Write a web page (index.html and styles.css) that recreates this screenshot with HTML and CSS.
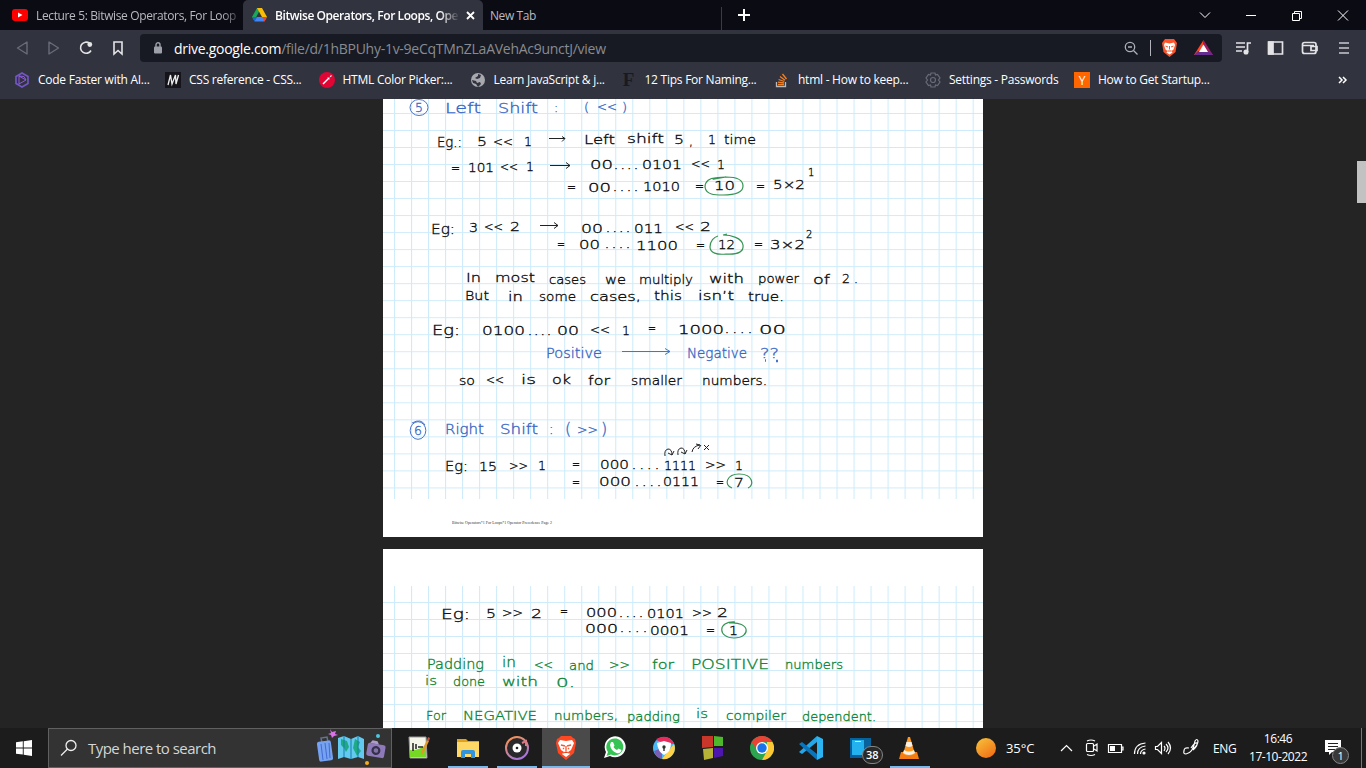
FILE: index.html
```html
<!DOCTYPE html>
<html lang="en">
<head>
<meta charset="utf-8">
<title>Bitwise Operators, For Loops, Operator Precedence</title>
<link rel="stylesheet" href="styles.css">
</head>
<body>
<header class="tabs">
  <div class="tab tab-first">
    <svg width="16" height="12" viewBox="0 0 16 12"><rect width="16" height="12" rx="3" fill="#f00"/><path d="M6 3.500v5L10.500 6z" fill="#fff"/></svg>
    <span class="tab-title">Lecture 5: Bitwise Operators, For Loop</span>
  </div>
  <div class="tab tab-active">
    <svg width="15" height="14" viewBox="0 0 15 14"><path d="M5 0h4L4.500 8.500 2.500 13 0 9z" fill="#19a75a"/><path d="M5 0h5l5 9h-5z" fill="#fbbc04"/><path d="M0 9h5l-2.500 4.500z" fill="#1967d2"/><path d="M5 9h10l-2.500 4.500h-10z" fill="#4285f4"/><path d="M10 9h5l-2.500 4.500z" fill="#ea4335"/></svg>
    <span class="tab-title">Bitwise Operators, For Loops, Ope</span>
    <svg class="tab-close" width="9" height="9" viewBox="0 0 9 9"><path d="M1 1l7 7M8 1L1 8" stroke="#fff" stroke-width="1.800"/></svg>
  </div>
  <div class="tab tab-new"><span>New Tab</span></div>
  <svg class="add" width="12" height="12" viewBox="0 0 12 12"><path d="M6 0v12M0 6h12" stroke="#fff" stroke-width="2"/></svg>
  <svg class="window-buttons" width="150" height="14" viewBox="0 0 150 14" fill="none" stroke="#fff"><path d="M1 4.500l5 5 5-5M47 7.500h10M93.500 5.500h7v7h-7zM95.500 5V3.500h7v7H101M139 2.500l10 10M149 2.500l-10 10"/></svg>
</header>

<div class="toolbar">
  <svg class="nav" width="112" height="20" viewBox="0 0 112 20" fill="none" stroke="#696b79" stroke-width="1.400"><path d="M13 4v12L3.500 10zM35 4v12l9.500-6z" stroke-linejoin="round"/><path d="M75.500 5.200A5.600 5.600 0 1 0 77 12.500" stroke="#e4e4e7" stroke-width="1.600"/><circle cx="75.800" cy="6.500" r="2.400" fill="#e4e4e7" stroke="none"/><path d="M100 4h8v12l-4-3.500-4 3.500z" stroke="#e4e4e7" stroke-width="1.600"/></svg>
  <div class="address">
    <svg width="8" height="12" viewBox="0 0 8 12"><path d="M2 5V2.800a2 2 0 0 1 4 0V5" fill="none" stroke="#9da0a8" stroke-width="1.400"/><rect y="4.500" width="8" height="7" rx="1" fill="#9da0a8"/></svg>
    <div class="url"><b>drive.google.com</b>/file/d/1hBPUhy-1v-9eCqTMnZLaAVehAc9unctJ/view</div>
    <svg class="address-icons" width="92" height="20" viewBox="0 0 92 20"><g fill="none" stroke="#aeb0b8" stroke-width="1.300"><circle cx="7" cy="9" r="4.700"/><path d="M10.500 12.500l4 4M5 9h4"/></g><path d="M27.500 2v16" stroke="#b2b3ba"/><path d="M42 1h9l3 4-1.500 9-6 5-6-5L39 5z" fill="#fb542b"/><path d="M42 4.500l4.500 1 4.500-1 1 2.500-1.500 4.500-2 1.500 1 1.500-3 2-3-2 1-1.500-2-1.500L41 7z" fill="#fff"/><path d="M42.500 8l2.500 1M50.500 8L48 9M46.500 8v3.500M44.500 13h4" stroke="#fb542b"/><path d="M80.500 2L71 17h9.500z" fill="#ff4724"/><path d="M80.500 2L90 17h-9.500z" fill="#9e1f63"/><path d="M71 17h19l-4-4H75z" fill="#662d91"/><path d="M80.500 6.500l4.500 7.500h-9z" fill="#fff"/></svg>
  </div>
  <svg class="tools" width="118" height="18" viewBox="0 0 118 18" fill="none" stroke="#e4e4e7" stroke-width="1.700"><path d="M1 4h9M1 8h9M1 12h6M12.500 13V4H16"/><circle cx="11" cy="13" r="1.700" fill="#e4e4e7"/><path d="M33.500 3h14v12h-14z"/><path d="M34 3h4v12h-4z" fill="#e4e4e7"/><rect x="67.500" y="3.500" width="13.500" height="11" rx="2"/><path d="M67.500 6.500H79M82 7.500h-6v4h6z"/><path d="M104 4h10M104 9h10M104 14h10" stroke="#c9cad0"/></svg>
</div>

<nav class="bookmarks">
  <div class="bookmark"><svg viewBox="0 0 16 16"><path d="M8 1l6 3.500v7L8 15l-6-3.500v-7z" fill="none" stroke="#7357c9" stroke-width="1.600"/><path d="M5 4v8l7-4zM5 4l5 .5L12 8" fill="none" stroke="#925ae1"/></svg><span>Code Faster with AI...</span></div>
  <div class="bookmark bookmark-wide"><svg viewBox="0 0 16 16"><path fill="#15141a" d="M0 0h16v16H0z"/><path d="M3 13L5.500 3 7 12 10.500 3 11 12 13.500 3" fill="none" stroke="#eee" stroke-width="1.300"/></svg><span>CSS reference - CSS...</span></div>
  <div class="bookmark"><svg viewBox="0 0 16 16"><circle cx="8" cy="8" r="8" fill="#df0636"/><path d="M4 12l6-6" stroke="#fff" stroke-width="1.500"/><path d="M8 5l2 1 2-3 1 1-3 2 1 2z" fill="#fff"/></svg><span>HTML Color Picker:...</span></div>
  <div class="bookmark"><svg viewBox="0 0 16 16"><circle cx="8" cy="8" r="7" fill="#a7a9ae"/><path d="M8 2l3 1-1 3-3 1-2-1 3-2zM2 8l4 1 1 2 3-1 1 2-3 3-2-3-3-1z" fill="#30323e"/></svg><span>Learn JavaScript &amp; j...</span></div>
  <div class="bookmark bookmark-wide"><i class="letter-f">F</i><span>12 Tips For Naming...</span></div>
  <div class="bookmark"><svg viewBox="0 0 16 16" fill="none"><path d="M2.500 10v4.500h9V10" stroke="#bcbbbb" stroke-width="1.300"/><path d="M4 12.500h6M4 10.200l6 .7M4.600 7.500l5.700 2M6 4.500l5 3.700M8.500 2l4 5" stroke="#f48024" stroke-width="1.300"/></svg><span>html - How to keep...</span></div>
  <div class="bookmark bookmark-settings"><svg viewBox="0 0 16 16" fill="none" stroke="#696b79" stroke-width="1.200"><path d="M6 1h4l.5 2 2-.5L15 6l-1.500 2L15 10l-2.500 3.500-2-.5L10 15H6l-.5-2-2 .5L1 10l1.500-2L1 6l2.500-3.500 2 .5z"/><circle cx="8" cy="8" r="2.500"/></svg><span>Settings - Passwords</span></div>
  <div class="bookmark"><i class="letter-y">Y</i><span>How to Get Startup...</span></div>
  <svg class="overflow" viewBox="0 0 10 8"><path d="M1 1l3 3-3 3M5 1l3 3-3 3" fill="none" stroke="#fff" stroke-width="1.500"/></svg>
</nav>

<main class="viewer">
  <div class="pages">
    <svg class="page" width="600" height="438" viewBox="383 99 600 438">
      <defs><pattern id="g1" x="394" y="113" width="17.020" height="17.020" patternUnits="userSpaceOnUse"><path d="M.5 0v17.020M0 .5h17.020" stroke="#cdebfa" stroke-width="1.100"/></pattern></defs>
      <rect x="383" y="99" width="600" height="400" fill="url(#g1)"/>
      <g class="blue">
        <ellipse cx="419" cy="107.500" rx="9" ry="8"/><text x="415" y="112">5</text>
        <text x="445" y="113" class="tall" textLength="36" lengthAdjust="spacingAndGlyphs">Left</text><text x="498" y="113" class="tall" textLength="40" lengthAdjust="spacingAndGlyphs">Shift</text><text x="554" y="112">:</text><text x="584" y="112" class="paren">(</text><text x="597" y="111" textLength="20" lengthAdjust="spacingAndGlyphs">&lt;&lt;</text><text x="622" y="112" class="paren">)</text>
        <text x="546" y="358" class="tall" textLength="56" lengthAdjust="spacingAndGlyphs">Positive</text><path d="M622 351.500h48m-5-3l5 3-5 3"/><text x="687" y="358" class="tall" textLength="60" lengthAdjust="spacingAndGlyphs">Negative</text><text x="760" y="358" class="tall" textLength="19" lengthAdjust="spacingAndGlyphs">??</text><path d="M765 360.500h1M776 361h2" stroke-width="2.500"/>
        <ellipse cx="418" cy="430.500" rx="7.800" ry="8.800"/><text x="414" y="435">6</text><path d="M412 423q9-5 13 2"/>
        <text x="445" y="434" class="tall" textLength="39" lengthAdjust="spacingAndGlyphs">Right</text><text x="500" y="434" class="tall" textLength="38" lengthAdjust="spacingAndGlyphs">Shift</text><text x="549" y="434" class="tall">:</text><text x="565" y="434" class="big">(</text><text x="577" y="434" textLength="21" lengthAdjust="spacingAndGlyphs">&gt;&gt;</text><text x="601" y="434" class="big">)</text>
      </g>
      <g class="ink">
        <text x="437" y="147" class="tall" textLength="25" lengthAdjust="spacingAndGlyphs">Eg.:</text><text x="477" y="146" textLength="10" lengthAdjust="spacingAndGlyphs">5</text><text x="493" y="146" textLength="20" lengthAdjust="spacingAndGlyphs">&lt;&lt;</text><text x="524" y="146">1</text><path d="M549 138.500h16m-3-2l3 2-3 3"/>
        <text x="584" y="144" textLength="31" lengthAdjust="spacingAndGlyphs">Left</text><text x="627" y="143" textLength="37" lengthAdjust="spacingAndGlyphs">shift</text><text x="674" y="144" textLength="10" lengthAdjust="spacingAndGlyphs">5</text><text x="689" y="146">,</text><text x="708" y="144">1</text><text x="724" y="144" textLength="32" lengthAdjust="spacingAndGlyphs">time</text>
        <text x="451" y="172" textLength="9" lengthAdjust="spacingAndGlyphs">=</text><text x="468" y="172" textLength="26" lengthAdjust="spacingAndGlyphs">101</text><text x="500" y="171" textLength="18" lengthAdjust="spacingAndGlyphs">&lt;&lt;</text><text x="526" y="171">1</text><path d="M550 165.500h20m-4-3l4 3-4 3"/>
        <text x="590" y="169" textLength="23" lengthAdjust="spacingAndGlyphs">00</text><text x="614" y="169" class="dots" textLength="24">....</text><text x="642" y="169" textLength="40" lengthAdjust="spacingAndGlyphs">0101</text><text x="691" y="168" textLength="19" lengthAdjust="spacingAndGlyphs">&lt;&lt;</text><text x="717" y="169">1</text>
        <text x="567" y="191" textLength="9" lengthAdjust="spacingAndGlyphs">=</text><text x="588" y="192" textLength="23" lengthAdjust="spacingAndGlyphs">00</text><text x="613" y="191" class="dots" textLength="25">....</text><text x="643" y="191" textLength="37" lengthAdjust="spacingAndGlyphs">1010</text><text x="695" y="190" textLength="9" lengthAdjust="spacingAndGlyphs">=</text><text x="714" y="190" textLength="21" lengthAdjust="spacingAndGlyphs">10</text><text x="756" y="190" textLength="9" lengthAdjust="spacingAndGlyphs">=</text><text x="773" y="189" textLength="32" lengthAdjust="spacingAndGlyphs">5×2</text><text x="808" y="176" class="super">1</text>
        <text x="431" y="234" class="tall" textLength="24" lengthAdjust="spacingAndGlyphs">Eg:</text><text x="469" y="232" textLength="9" lengthAdjust="spacingAndGlyphs">3</text><text x="484" y="231" textLength="19" lengthAdjust="spacingAndGlyphs">&lt;&lt;</text><text x="510" y="231" textLength="10" lengthAdjust="spacingAndGlyphs">2</text><path d="M540 225.500h18m-4-3l4 3-4 3"/>
        <text x="581" y="233" textLength="22" lengthAdjust="spacingAndGlyphs">00</text><text x="606" y="232" class="dots" textLength="24">....</text><text x="634" y="233" textLength="29" lengthAdjust="spacingAndGlyphs">011</text><text x="675" y="231" textLength="19" lengthAdjust="spacingAndGlyphs">&lt;&lt;</text><text x="700" y="231" textLength="11" lengthAdjust="spacingAndGlyphs">2</text>
        <text x="557" y="248" textLength="8" lengthAdjust="spacingAndGlyphs">=</text><text x="579" y="249" textLength="21" lengthAdjust="spacingAndGlyphs">00</text><text x="605" y="248" class="dots" textLength="25">....</text><text x="636" y="250" textLength="42" lengthAdjust="spacingAndGlyphs">1100</text><text x="696" y="249" textLength="9" lengthAdjust="spacingAndGlyphs">=</text><text x="718" y="249" textLength="17" lengthAdjust="spacingAndGlyphs">12</text><text x="754" y="248" textLength="9" lengthAdjust="spacingAndGlyphs">=</text><text x="770" y="249" textLength="35" lengthAdjust="spacingAndGlyphs">3×2</text><text x="806" y="238" class="super">2</text>
        <text x="466" y="282" textLength="15" lengthAdjust="spacingAndGlyphs">In</text><text x="495" y="282" textLength="40" lengthAdjust="spacingAndGlyphs">most</text><text x="549" y="284" textLength="37" lengthAdjust="spacingAndGlyphs">cases</text><text x="605" y="284" textLength="21" lengthAdjust="spacingAndGlyphs">we</text><text x="639" y="284" textLength="54" lengthAdjust="spacingAndGlyphs">multiply</text><text x="709" y="283" textLength="35" lengthAdjust="spacingAndGlyphs">with</text><text x="758" y="283" textLength="41" lengthAdjust="spacingAndGlyphs">power</text><text x="813" y="284" textLength="17" lengthAdjust="spacingAndGlyphs">of</text><text x="842" y="283" textLength="16">2.</text>
        <text x="465" y="300" textLength="24" lengthAdjust="spacingAndGlyphs">But</text><text x="508" y="301" textLength="15" lengthAdjust="spacingAndGlyphs">in</text><text x="539" y="301" textLength="37" lengthAdjust="spacingAndGlyphs">some</text><text x="590" y="301" textLength="51" lengthAdjust="spacingAndGlyphs">cases,</text><text x="654" y="300" textLength="28" lengthAdjust="spacingAndGlyphs">this</text><text x="698" y="300" textLength="36" lengthAdjust="spacingAndGlyphs">isn’t</text><text x="748" y="301" textLength="36" lengthAdjust="spacingAndGlyphs">true.</text>
        <text x="432" y="335" class="tall" textLength="28" lengthAdjust="spacingAndGlyphs">Eg:</text><text x="482" y="335" textLength="43" lengthAdjust="spacingAndGlyphs">0100</text><text x="528" y="335" class="dots" textLength="23">....</text><text x="557" y="335" textLength="22" lengthAdjust="spacingAndGlyphs">00</text><text x="590" y="334" textLength="20" lengthAdjust="spacingAndGlyphs">&lt;&lt;</text><text x="622" y="335">1</text><text x="648" y="332" textLength="8" lengthAdjust="spacingAndGlyphs">=</text>
        <text x="678" y="334" textLength="46" lengthAdjust="spacingAndGlyphs">1000</text><text x="725" y="333" class="dots" textLength="27">....</text><text x="759" y="334" textLength="27" lengthAdjust="spacingAndGlyphs">00</text>
        <text x="459" y="385" textLength="16" lengthAdjust="spacingAndGlyphs">so</text><text x="486" y="384" textLength="18" lengthAdjust="spacingAndGlyphs">&lt;&lt;</text><text x="521" y="384" textLength="15" lengthAdjust="spacingAndGlyphs">is</text><text x="552" y="384" textLength="19" lengthAdjust="spacingAndGlyphs">ok</text><text x="588" y="385" textLength="22" lengthAdjust="spacingAndGlyphs">for</text><text x="631" y="385" textLength="51" lengthAdjust="spacingAndGlyphs">smaller</text><text x="702" y="385" textLength="65" lengthAdjust="spacingAndGlyphs">numbers.</text>
        <text x="445" y="471" class="tall" textLength="23" lengthAdjust="spacingAndGlyphs">Eg:</text><text x="479" y="471" textLength="18" lengthAdjust="spacingAndGlyphs">15</text><text x="509" y="470" textLength="19" lengthAdjust="spacingAndGlyphs">&gt;&gt;</text><text x="538" y="470">1</text><text x="572" y="468" textLength="8" lengthAdjust="spacingAndGlyphs">=</text><text x="600" y="469" textLength="29" lengthAdjust="spacingAndGlyphs">000</text><text x="632" y="469" class="dots" textLength="27">....</text><text x="664" y="470" textLength="32" lengthAdjust="spacingAndGlyphs">1111</text><text x="705" y="469" textLength="21" lengthAdjust="spacingAndGlyphs">&gt;&gt;</text><text x="735" y="470">1</text>
        <path d="M665 456q-1-6 3-7 4 0 4 6l-4-2m4 2l2-4M678 455q-1-6 3-7 4 0 4 6l-4-2m4 2l2-4M692 452q1-6 8-7l-4-1m5 1l-3 4m6-4l5 5m0-5l-5 5"/>
        <text x="572" y="486" textLength="8" lengthAdjust="spacingAndGlyphs">=</text><text x="599" y="486" textLength="32" lengthAdjust="spacingAndGlyphs">000</text><text x="635" y="486" class="dots" textLength="26">....</text><text x="663" y="486" textLength="36" lengthAdjust="spacingAndGlyphs">0111</text><text x="716" y="486" textLength="8" lengthAdjust="spacingAndGlyphs">=</text><text x="734" y="487" textLength="10" lengthAdjust="spacingAndGlyphs">7</text>
      </g>
      <g class="green"><path d="M718 178c-9-1-13 4-13 9 1 8 10 8 18 8 13 0 20-3 20-9 0-7-9-9-17-9-10 0-12 2-12 2l12-2"/><path d="M718 236c-4 1-8 5-8 11 0 6 7 8 16 7 13 1 18-3 17-9-1-7-12-10-20-10l4-1"/><path d="M732 488c-9-3-5-14 7-14 15 0 15 12 9 14"/></g>
      <text class="footer" x="452" y="524" textLength="100" lengthAdjust="spacingAndGlyphs">Bitwise Operators*1 For Loops*1 Operator Precedence Page 2</text>
    </svg>
    <svg class="page" width="600" height="179" viewBox="383 549 600 179">
      <defs><pattern id="g2" x="394" y="602" width="17.020" height="17.020" patternUnits="userSpaceOnUse"><path d="M.5 0v17.020M0 .5h17.020" stroke="#cdebfa" stroke-width="1.100"/></pattern></defs>
      <rect x="383" y="586" width="600" height="142" fill="url(#g2)"/>
      <g class="ink">
        <text x="441" y="619" class="tall" textLength="29" lengthAdjust="spacingAndGlyphs">Eg:</text><text x="486" y="618" textLength="10" lengthAdjust="spacingAndGlyphs">5</text><text x="502" y="617" textLength="21" lengthAdjust="spacingAndGlyphs">&gt;&gt;</text><text x="531" y="618" textLength="11" lengthAdjust="spacingAndGlyphs">2</text><text x="560" y="615" textLength="8" lengthAdjust="spacingAndGlyphs">=</text><text x="586" y="617" textLength="31" lengthAdjust="spacingAndGlyphs">000</text><text x="619" y="617" class="dots" textLength="24">....</text><text x="647" y="618" textLength="37" lengthAdjust="spacingAndGlyphs">0101</text><text x="692" y="617" textLength="20" lengthAdjust="spacingAndGlyphs">&gt;&gt;</text><text x="717" y="617" textLength="11" lengthAdjust="spacingAndGlyphs">2</text>
        <text x="585" y="633" textLength="33" lengthAdjust="spacingAndGlyphs">000</text><text x="620" y="632" class="dots" textLength="27">....</text><text x="650" y="635" textLength="39" lengthAdjust="spacingAndGlyphs">0001</text><text x="706" y="634" textLength="9" lengthAdjust="spacingAndGlyphs">=</text><text x="729" y="635" textLength="9" lengthAdjust="spacingAndGlyphs">1</text>
      </g>
      <g class="green">
        <path d="M735 622c-18-1-17 16-1 16 17 0 17-17-5-15"/>
        <text x="427" y="669" class="tall" textLength="57" lengthAdjust="spacingAndGlyphs">Padding</text><text x="502" y="667" class="tall" textLength="14" lengthAdjust="spacingAndGlyphs">in</text><text x="534" y="669" textLength="19" lengthAdjust="spacingAndGlyphs">&lt;&lt;</text><text x="569" y="670" textLength="25" lengthAdjust="spacingAndGlyphs">and</text><text x="609" y="669" textLength="21" lengthAdjust="spacingAndGlyphs">&gt;&gt;</text><text x="652" y="669" textLength="22" lengthAdjust="spacingAndGlyphs">for</text><text x="691" y="669" class="tall" textLength="78" lengthAdjust="spacingAndGlyphs">POSITIVE</text><text x="785" y="669" textLength="58" lengthAdjust="spacingAndGlyphs">numbers</text>
        <text x="425" y="685" textLength="12" lengthAdjust="spacingAndGlyphs">is</text><text x="453" y="686" textLength="32" lengthAdjust="spacingAndGlyphs">done</text><text x="502" y="686" textLength="36" lengthAdjust="spacingAndGlyphs">with</text><text x="556" y="687" textLength="19" lengthAdjust="spacingAndGlyphs">0.</text>
        <text x="426" y="720" textLength="20" lengthAdjust="spacingAndGlyphs">For</text><text x="463" y="720" textLength="74" lengthAdjust="spacingAndGlyphs">NEGATIVE</text><text x="554" y="720" textLength="64" lengthAdjust="spacingAndGlyphs">numbers,</text><text x="627" y="721" textLength="53" lengthAdjust="spacingAndGlyphs">padding</text><text x="696" y="718" textLength="12" lengthAdjust="spacingAndGlyphs">is</text><text x="726" y="720" textLength="60" lengthAdjust="spacingAndGlyphs">compiler</text><text x="802" y="721" textLength="74" lengthAdjust="spacingAndGlyphs">dependent.</text>
      </g>
    </svg>
  </div>
  <div class="scrollbar"><div class="thumb"></div></div>
</main>

<footer class="taskbar">
  <svg class="start" width="16" height="16" viewBox="0 0 16 16"><path d="M0 2.300L6.800 1.300v6.200H0zM7.700 1.200L16 0v7.500H7.700zM0 8.400h6.800v6.200L0 13.700zM7.700 8.400H16V16l-8.300-1.200z" fill="#fff"/></svg>
  <div class="search">
    <svg width="18" height="18" viewBox="0 0 18 18" fill="none" stroke="#eee" stroke-width="1.300"><circle cx="11" cy="6.500" r="5"/><path d="M7.500 10L1 16.500"/></svg>
    <span>Type here to search</span>
    <svg class="travel" width="74" height="38" viewBox="0 0 74 38"><path d="M15 0l2 3 4-1-1 3 3 1-4 1-2 2-1-3-3-1 3-1z" fill="#d873e8"/><path d="M7 14l-1-5 6-1 1 5" fill="none" stroke="#66748f" stroke-width="1.500"/><rect x="3" y="12" width="14" height="20" rx="2" fill="#76a2f1" transform="rotate(-8 10 22)"/><path d="M6 15l2 16M10 14l2 16M14 14l1 15" stroke="#416bd1"/><path d="M23 9l6-2 7 3 7-3 6 3v20l-6-2-7 2-7-2-6 2z" fill="#63c9ef"/><path d="M26 10l6 2 2 6-3 5-2-4-3-3zM40 10l5 3-2 5 3 4-4 5-4-8z" fill="#20aa83"/><path d="M29 7v21M36 10v20M43 7v21" stroke="#167dae"/><g transform="rotate(10 61 21)"><rect x="52" y="15" width="18" height="13" rx="2" fill="#8f7ab9"/><path d="M54 15l2-3h5l2 3" fill="#ad9bc9"/><circle cx="61" cy="21.500" r="4.500" fill="#36304c"/><circle cx="61" cy="21.500" r="2.300" fill="#8273a6"/></g><circle cx="63" cy="7" r="2" fill="#4cc7dc"/><circle cx="52" cy="34" r="2" fill="#f6ae1b"/></svg>
  </div>
  <div class="apps">
    <div class="app"><svg viewBox="0 0 24 24"><path d="M2 1h17l1 21H3z" fill="#f5f5ea" stroke="#999"/><path d="M3 14q8 1 16-5v12H3z" fill="#76d923"/><path d="M6 15V7M9 8v5M11 11h5" stroke="#222" stroke-width="1.500"/><path d="M20 4l2 1-6 13-2 1v-3z" fill="#df9b25"/><path d="M21 1l2 1-1 3-2-1z" fill="#c25341"/></svg></div>
    <div class="app open"><svg viewBox="0 0 24 24"><path d="M1 3h9l2 2h11v15H1z" fill="#e1a11b"/><path d="M1 6h22v15H1z" fill="#ffd765"/><path d="M5 22v-6q0-2 2-2h10q2 0 2 2v6h-4v-4H9v4z" fill="#3195dd"/></svg></div>
    <div class="app open"><svg viewBox="0 0 24 24"><defs><linearGradient id="ring" x1="0" y1="0" x2=".5" y2="1"><stop stop-color="#ff9447"/><stop offset="1" stop-color="#a777d7"/></linearGradient></defs><circle cx="12" cy="12" r="11" fill="#29282b" stroke="url(#ring)" stroke-width="2"/><circle cx="12" cy="12" r="4.500" fill="#fff"/><circle cx="12" cy="12" r="1.300" fill="#222"/><path d="M17 7l4-2v5" fill="none" stroke="#d77b86" stroke-width="2"/></svg></div>
    <div class="app open current"><svg viewBox="0 0 24 24"><path d="M7 0h10l2 2 2 1 1 4-2 10-8 7-8-7L2 7l1-4 2-1z" fill="#ff4822"/><path d="M6 4l6 1 6-1 2 3-3 7-3 2 2 2-4 3-4-3 2-2-3-2-3-7z" fill="#fff"/><path d="M7 9l4 1M17 9l-4 1M12 10v5M9 12l1 1M15 12l-1 1M9 17l3-1 3 1" stroke="#fb542b" stroke-width="1.300"/></svg></div>
    <div class="app"><svg viewBox="0 0 24 24"><path d="M1 22l2-6a10.500 10.500 0 1 1 4 4z" fill="#fff"/><path d="M3.500 20l1.500-4a8.500 8.500 0 1 1 3 2.500z" fill="#35c453"/><path d="M8 6l2 0 1.500 3.500-1 1.500q1.500 2.500 3.500 3l1.500-1.500 3 1.500q-1 4-5 3Q8 15 7 9z" fill="#fff"/></svg></div>
    <div class="app"><svg viewBox="0 0 24 24"><circle cx="12" cy="12" r="11" fill="#49b8f6"/><path d="M4 4A11 11 0 0 1 22 8L12 7z" fill="#e82b5d"/><path d="M22 8a11 11 0 0 1-12 15l7-9z" fill="#ffd247"/><path d="M10 23A11 11 0 0 1 2 15l8-3z" fill="#7a5eb4"/><path d="M12 5l7 2q0 9-7 12Q6 16 5 7z" fill="#fff"/><circle cx="12" cy="11" r="1.700" fill="#333"/><path d="M12 11v4" stroke="#333" stroke-width="1.400"/></svg></div>
    <div class="app"><svg viewBox="0 0 24 24"><path d="M1 0h11v11L1 12z" fill="#c9372b"/><path d="M13 0l9 1v9h-9z" fill="#4db82b"/><path d="M2 13l10-1v10L3 24z" fill="#b7b337"/><path d="M13 12h9v8l-9 2z" fill="#4d16ad"/></svg></div>
    <div class="app"><svg viewBox="0 0 24 24"><circle cx="12" cy="12" r="12" fill="#2da44e"/><path d="M22.400 6A12 12 0 0 1 12 24l5-9V6z" fill="#fcc934"/><path d="M1.600 6l6 9L12 6h10.400a12 12 0 0 0-20.800 0" fill="#e94335"/><circle cx="12" cy="12" r="6" fill="#fff"/><circle cx="12" cy="12" r="4.700" fill="#1a73e8"/></svg></div>
    <div class="app"><svg viewBox="0 0 24 24"><path d="M18 0v6L3 18l-3-2z" fill="#24a7e8"/><path d="M0 8l3-2 15 12v6z" fill="#0875bd"/><path d="M18 0l6 3v18l-6 3z" fill="#2bb3f2"/></svg></div>
    <div class="app"><svg viewBox="0 0 24 24"><path d="M2 2h21v15H2z" fill="#08639c"/><path d="M2 12h12v10H2z" fill="#065d9e"/><path d="M4 4h12v15H4z" fill="#24b2ef"/><path d="M7 5.500h6" stroke="#c1f1ff"/></svg><b class="badge">38</b></div>
    <div class="app open"><svg viewBox="0 0 24 24"><path d="M4 16h16l2 7H2z" fill="#f47c12"/><path d="M11 1h2l5 17q-6 3-12 0z" fill="#ff961e"/><path d="M9.500 6h5l1 4q-3.500 2-7 0zM7 14q5 3 10 0l1 3q-6 4-12 0z" fill="#f7f1e7"/></svg></div>
  </div>
  <div class="weather"><i></i><span>35°C</span></div>
  <svg class="tray" width="144" height="20" viewBox="1057 738 144 20" fill="none" stroke="#fff" stroke-width="1.200"><path d="M1061 751l5.500-5.500L1072 751"/><rect x="1086.500" y="743.500" width="7" height="8" rx="1"/><path d="M1094 746l3-2v7l-3-2M1087 741q4-2 8 0M1087 754.500q4 2 8 0M1108.500 744.500h13v8h-13zM1122 747h1v3h-1"/><path d="M1110 746h5v5h-5z" fill="#fff" stroke="none"/><path d="M1134.500 754q0-10 11-11M1137.500 754q0-7 8-8M1140.500 754q0-4 5-5"/><circle cx="1144" cy="753" r="1" fill="#fff"/><path d="M1155.500 746.500h2l4-4v11l-4-4h-2zM1164 746q2 2 0 5M1166 744q4 4 0 8M1168 742q5 6 0 12"/><path d="M1189 748q-5-1-5 3-1 3 2 3 7-1 9-13 2-3 3 0 0 4-5 8M1191 748q4-6 6-5 1 3-4 7"/></svg>
  <span class="language">ENG</span>
  <div class="clock"><span>16:46</span><span>17-10-2022</span></div>
  <div class="notice"><svg width="16" height="16" viewBox="0 0 16 16"><path d="M0 0h16v12H7l-3 3v-3H0z" fill="#fff"/><path d="M3 3.500h10M3 6.500h10M3 9.500h7" stroke="#222"/></svg><b>1</b></div>
  <div class="desktop-edge"></div>
</footer>
</body>
</html>
```
FILE: styles.css
```css
* { box-sizing: border-box; }
body { margin: 0; width: 1366px; height: 768px; overflow: hidden; display: flex; flex-direction: column; background: #242424; color: #fff; font: 12px "Open Sans", "Noto Sans", sans-serif; }
svg { display: block; flex: none; }

.tabs { display: flex; align-items: center; flex: none; height: 30px; background: #0b0b14; }
.tab { display: flex; align-items: center; flex: none; height: 30px; }
.tab-first { width: 243px; padding: 0 1px 0 12px; gap: 8px; color: #b9bac0; }
.tab-title { flex: 1; white-space: nowrap; letter-spacing: -.37px; mask-image: linear-gradient(to right, #000 90%, transparent 101%); }
.tab-active { width: 240px; padding: 0 8px 0 9px; gap: 8px; border-radius: 5px 5px 0 0; background: #31333f; }
.tab-active .tab-title { font-weight: 600; letter-spacing: -.43px; }
.tab-new { width: 239px; height: 23px; margin-top: 7px; padding: 0 0 7px 7px; border-right: 1px solid #3b3b43; color: #b9bac0; letter-spacing: -.42px; }
.add { margin-left: 16px; }
.window-buttons { margin-left: auto; margin-right: 17px; }

.toolbar { display: flex; align-items: center; flex: none; height: 36px; background: #31333f; }
.nav { margin-left: 14px; }
.address { display: flex; align-items: center; width: 1082px; height: 28px; margin-left: 14px; padding: 0 7px 0 14px; border-radius: 4px; background: #171a22; }
.url { flex: 1; margin-left: 12px; color: #898b91; font-size: 14px; letter-spacing: -.27px; white-space: nowrap; }
.url b { color: #fff; font-weight: 400; }
.tools { margin-left: 13px; }

.bookmarks { display: flex; align-items: center; flex: none; height: 33px; padding: 0 18px 6px 14px; background: #31333f; }
.bookmark { display: flex; align-items: center; flex: none; width: 151px; gap: 8px; white-space: nowrap; letter-spacing: -.25px; }
.bookmark-wide { width: 153.500px; }
.bookmark-settings { width: 149px; }
.bookmark svg { width: 16px; height: 16px; }
.bookmark i { display: grid; place-items: center; width: 16px; height: 16px; font-style: normal; }
.letter-f { color: #191a20; font: bold 19px/16px "Liberation Serif", serif; }
.letter-y { background: #ff6600; }
.bookmarks .overflow { width: 10px; height: 8px; margin-left: auto; }

.viewer { display: flex; flex: none; height: 629px; background: #242424; overflow: hidden; }
.pages { display: flex; flex-direction: column; gap: 12px; width: 600px; margin-left: 383px; }
.page { background: #fff; }
.page text { font: 200 12.5px "DejaVu Sans Light", "DejaVu Sans", sans-serif; stroke-width: .35px; }
.page .tall { font-size: 13.5px; }
.page .paren { font-size: 13px; }
.page .big { font-size: 16px; }
.page .super { font-size: 10px; }
.page .dots { stroke-width: .6px; }
.page .footer { font: 4px "Liberation Serif", serif; fill: #333; }
.ink path { fill: none; stroke: #222; }
.ink text { fill: #111; stroke: #111; }
.blue text { fill: #3969c4; stroke: #3969c4; }
.blue path, .blue ellipse { fill: none; stroke: #4774c9; }
.green text { fill: #12873a; stroke: #12873a; }
.green path { fill: none; stroke: #369454; stroke-width: 1.2; }
.scrollbar { width: 9px; margin-left: auto; padding-top: 62px; }
.thumb { height: 42px; background: #c2c2c2; }

.taskbar { display: flex; align-items: center; flex: none; height: 40px; background: #1c1c1c; }
.start { margin-left: 16px; }
.search { display: flex; align-items: center; width: 344px; height: 40px; margin-left: 16px; padding: 0 2px 0 11px; border: 1px solid #606060; background: #333; color: #d6d6d6; font-size: 15px; letter-spacing: -.53px; }
.search span { margin-left: 10px; }
.travel { margin-left: auto; }
.apps { display: flex; margin-left: 2px; }
.app { position: relative; display: grid; place-items: center; width: 49.1px; height: 40px; }
.app svg { width: 24px; height: 24px; }
.open::after { content: ""; position: absolute; bottom: 0; left: 5px; right: 4px; height: 2px; background: #76b9ed; }
.current::before { content: ""; position: absolute; inset: 0 0 0 1px; background: #4a4a4a; }
.current svg { position: relative; }
.current::after { left: 1px; right: 0; }
.badge { position: absolute; left: 26px; top: 18px; width: 21px; height: 18px; border: 1px solid #858585; border-radius: 10px; background: #292929; font: 600 11px/16px "Open Sans", sans-serif; text-align: center; }
.weather { display: flex; align-items: center; width: 81px; margin-left: 42px; gap: 10px; font-size: 13px; letter-spacing: -.1px; }
.weather i { width: 20px; height: 20px; border-radius: 50%; background: linear-gradient(145deg, #f7c53b, #f26612); }
.language { width: 28px; margin-left: 12px; letter-spacing: -.4px; }
.clock { display: flex; flex-direction: column; align-items: center; width: 70px; margin-left: 2px; line-height: 18px; letter-spacing: -.45px; }
.notice { position: relative; width: 16px; height: 16px; margin-left: 12px; }
.notice b { position: absolute; left: 7px; top: 7px; width: 17px; height: 17px; border: 1px solid #888; border-radius: 50%; background: #393939; font: 11px/15px "Open Sans", sans-serif; text-align: center; }
.desktop-edge { width: 1px; height: 40px; margin-left: 20px; background: #777; }
```
